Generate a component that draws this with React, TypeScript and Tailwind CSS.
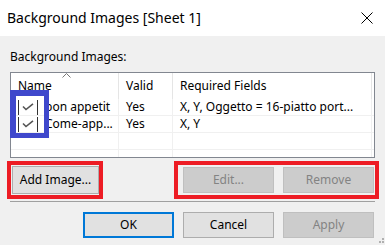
import React from "react";

type BtnKind = "normal" | "default" | "disabled";

const Button = ({ label, kind = "normal", className = "" }: { label: string; kind?: BtnKind; className?: string }) => {
  const look =
    kind === "disabled"
      ? "bg-[#cccccc] border border-[#bfbfbf] text-[#838383]"
      : kind === "default"
      ? "bg-[#e1e1e1] border-2 border-[#0078d7] text-black"
      : "bg-[#e1e1e1] border border-[#adadad] text-black";
  return (
    <div className={`flex items-center justify-center text-[12px] leading-[16px] ${look} ${className}`}>
      {label}
    </div>
  );
};

const CheckCell = () => (
  <div className="flex items-center justify-center w-[20px] h-[15px] border-l border-r border-[#333]">
    <svg width="12" height="8" viewBox="0 0 12 8">
      <path d="M1 3.5 L4 6.5 L11 0.8" fill="none" stroke="#555" strokeWidth="1.6" />
    </svg>
  </div>
);

const rows = [
  { name: "bon appetit", valid: "Yes", fields: "X, Y, Oggetto = 16-piatto port..." },
  { name: "Come-app...", valid: "Yes", fields: "X, Y" },
  null,
  null,
];

const cols = "grid grid-cols-[108px_54px_199px_1fr]";

export default function App() {
  return (
    <div className="relative w-[385px] h-[245px] overflow-hidden bg-[#f0f0f0] font-['Noto_Sans',sans-serif] text-black">
      {/* title bar */}
      <div className="h-[36px] bg-white flex items-center justify-between pl-[7px] pr-[12px]">
        <span className="text-[14px] leading-[18px]">Background Images [Sheet 1]</span>
        <svg width="12" height="12" viewBox="0 0 12 12" className="mt-[-1px]">
          <path d="M0.5 0.5 L11.5 11.5 M11.5 0.5 L0.5 11.5" stroke="#000" strokeWidth="1" />
        </svg>
      </div>

      <div className="px-[10px]">
        <div className="pt-[13px] text-[12px] leading-[16px]">Background Images:</div>

        {/* list view */}
        <div className="mt-[7px] h-[86px] border border-[#828790] bg-white overflow-hidden text-[12px] leading-[16px]">
          <div className={`${cols} h-[26px]`}>
            <div className="relative flex items-center pl-[7px] border-r border-[#e5e5e5]">
              <svg width="9" height="5" viewBox="0 0 9 5" className="absolute top-0 left-[51px]">
                <path d="M0.5 4.5 L4.5 0.5 L8.5 4.5" fill="none" stroke="#777" strokeWidth="1" />
              </svg>
              Name
            </div>
            <div className="flex items-center pl-[7px] border-r border-[#e5e5e5]">Valid</div>
            <div className="flex items-center pl-[7px] border-r border-[#e5e5e5]">Required Fields</div>
            <div />
          </div>
          {rows.map((r, i) => (
            <div key={i} className={`${cols} h-[17px] border-b border-[#f0f0f0]`}>
              <div className="flex items-center pl-[7px] border-r border-[#f0f0f0] whitespace-nowrap overflow-hidden">
                {r && (
                  <>
                    <CheckCell />
                    <span className="ml-[7px]">{r.name}</span>
                  </>
                )}
              </div>
              <div className="flex items-center pl-[7px] border-r border-[#f0f0f0]">{r?.valid}</div>
              <div className="flex items-center pl-[7px] border-r border-[#f0f0f0] whitespace-nowrap overflow-hidden">
                {r?.fields}
              </div>
              <div />
            </div>
          ))}
        </div>
      </div>

      {/* image buttons, marked in red */}
      <div className="mt-[3px] flex justify-between pl-[7px] pr-[6px]">
        <div className="h-[38px] border-4 border-[#ed1c24] pl-[1px] pt-[1px]">
          <Button label="Add Image..." className="w-[87px] h-[28px]" />
        </div>
        <div className="h-[38px] border-4 border-[#ed1c24] pl-[5px] pr-[1px] pt-[2px] flex gap-[9px]">
          <Button label="Edit..." kind="disabled" className="w-[91px] h-[26px]" />
          <Button label="Remove" kind="disabled" className="w-[91px] h-[26px]" />
        </div>
      </div>

      <div className="mt-[2px] mx-[10px] border-t border-[#a0a0a0]" />

      <div className="mt-[10px] flex justify-end gap-[9px] pr-[11px]">
        <Button label="OK" kind="default" className="w-[91px] h-[26px]" />
        <Button label="Cancel" className="w-[91px] h-[26px]" />
        <Button label="Apply" kind="disabled" className="w-[91px] h-[26px]" />
      </div>

      {/* annotation around the check boxes */}
      <div className="absolute left-[10px] top-[90px] w-[39px] h-[48px] border-[#3f48cc] border-l-[6px] border-t-[6px] border-r-[5px] border-b-[5px]" />

      {/* size grip */}
      <svg width="8" height="8" viewBox="0 0 8 8" className="absolute right-0 bottom-0">
        <rect x="5" y="1" width="2" height="2" fill="#b0b0b0" />
        <rect x="2" y="4" width="2" height="2" fill="#b0b0b0" />
        <rect x="5" y="4" width="2" height="2" fill="#b0b0b0" />
      </svg>
    </div>
  );
}
